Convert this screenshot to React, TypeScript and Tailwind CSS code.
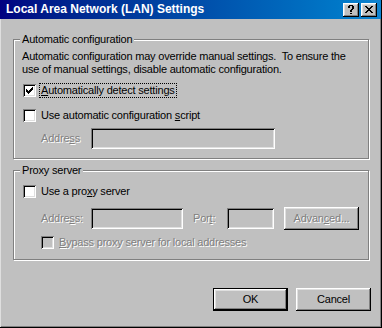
import type { ReactNode } from "react"

const raised =
  "shadow-[inset_-1px_-1px_0_#000,inset_1px_1px_0_#fff,inset_-2px_-2px_0_#808080,inset_2px_2px_0_#dfdfdf]"
const sunken =
  "shadow-[inset_1px_1px_0_#808080,inset_-1px_-1px_0_#fff,inset_2px_2px_0_#000,inset_-2px_-2px_0_#dfdfdf]"
const greyed = "text-[#808080] [text-shadow:1px_1px_0_#fff]"

// tiny pixel glyphs for the caption buttons
const Pixels = ({ rows, color = "#000" }: { rows: string[]; color?: string }) => (
  <svg width={rows[0].length} height={rows.length} shapeRendering="crispEdges">
    {rows.map((r, y) =>
      r.split("").map((c, x) => (c === "X" ? <rect key={`${x}-${y}`} x={x} y={y} width="1" height="1" fill={color} /> : null))
    )}
  </svg>
)

const helpGlyph = [".XXXX.", "XX..XX", "XX..XX", "....XX", "...XX.", "..XX..", "..XX..", "......", "..XX.."]
const closeGlyph = ["XX....XX", ".XX..XX.", "..XXXX..", "...XX...", "..XXXX..", ".XX..XX.", "XX....XX"]

const Check = ({ on, disabled }: { on?: boolean; disabled?: boolean }) => (
  <span
    className={`w-[13px] h-[13px] shrink-0 flex items-center justify-center ${sunken} ${disabled ? "bg-[#c0c0c0]" : "bg-white"}`}
  >
    {on && (
      <svg width="7" height="7" shapeRendering="crispEdges">
        <path d="M0 2H1V3H2V4H3V3H4V2H5V1H6V0H7V3H6V4H5V5H4V6H3V7H2V6H1V5H0Z" fill="#000" />
      </svg>
    )}
  </span>
)

const Field = ({ w }: { w: string }) => <div className={`h-[21px] bg-[#c0c0c0] ${sunken} ${w}`} />

const Group = ({ title, children }: { title: string; children: ReactNode }) => (
  <fieldset className="border border-[#808080] shadow-[1px_1px_0_#fff,inset_1px_1px_0_#fff] m-0 p-0 min-w-0">
    <legend className="ml-[6px] px-[2px] bg-[#c0c0c0] leading-[13px]">{title}</legend>
    {children}
  </fieldset>
)

const Btn = ({ children, def, disabled }: { children: ReactNode; def?: boolean; disabled?: boolean }) =>
  def ? (
    <div className="border border-black">
      <button className={`w-[73px] h-[21px] bg-[#c0c0c0] flex items-center justify-center ${raised}`}>{children}</button>
    </div>
  ) : (
    <button className={`w-[75px] h-[23px] bg-[#c0c0c0] flex items-center justify-center ${raised} ${disabled ? greyed : ""}`}>
      {children}
    </button>
  )

export default function App() {
  return (
    <div className="w-[382px] h-[328px] bg-[#c0c0c0] flex flex-col border-r border-b border-black text-[11px] leading-[13px] tracking-[-0.2px] text-black font-['Liberation_Sans',Arial,sans-serif]">
      {/* caption */}
      <div className="h-[19px] shrink-0 flex items-center justify-between pl-[6px] pr-[4px] bg-linear-to-r from-[#000080] to-[#1084d0]">
        <span className="text-white font-bold text-[12px] tracking-normal">Local Area Network (LAN) Settings</span>
        <div className="flex gap-[2px]">
          <div className={`w-[16px] h-[14px] bg-[#c0c0c0] flex items-center justify-center ${raised}`}>
            <Pixels rows={helpGlyph} />
          </div>
          <div className={`w-[16px] h-[14px] bg-[#c0c0c0] flex items-center justify-center ${raised}`}>
            <Pixels rows={closeGlyph} />
          </div>
        </div>
      </div>

      <div className="flex-1 flex flex-col border-l border-[#dfdfdf] shadow-[inset_-1px_-1px_0_#808080] px-3 pt-[14px]">
        <Group title="Automatic configuration">
          <div className="pl-[8px] pt-[4px] pb-[9px] flex flex-col">
            <p>
              Automatic configuration may override manual settings.&nbsp; To ensure the
              <br />
              use of manual settings, disable automatic configuration.
            </p>
            <div className="flex items-center gap-[4px] mt-[8px] pl-px">
              <Check on />
              <span className="outline outline-1 outline-dotted outline-black px-px">
                <u>A</u>utomatically detect settings
              </span>
            </div>
            <div className="flex items-center gap-[5px] mt-[12px] pl-px">
              <Check />
              <span>
                Use automatic configuration <u>s</u>cript
              </span>
            </div>
            <div className="flex items-center mt-[6px] pl-[19px]">
              <span className={`w-[50px] ${greyed}`}>
                Addre<u>s</u>s
              </span>
              <Field w="w-[184px]" />
            </div>
          </div>
        </Group>

        <div className="mt-[5px]">
          <Group title="Proxy server">
            <div className="pl-[8px] pt-[8px] pb-[10px] flex flex-col">
              <div className="flex items-center gap-[5px] pl-px">
                <Check />
                <span>
                  Use a pro<u>x</u>y server
                </span>
              </div>
              <div className="flex items-center mt-[9px] pl-[19px]">
                <span className={`w-[50px] ${greyed}`}>
                  Addre<u>s</u>s:
                </span>
                <Field w="w-[92px]" />
                <span className={`ml-[10px] w-[34px] ${greyed}`}>
                  Por<u>t</u>:
                </span>
                <Field w="w-[47px]" />
                <div className="ml-[10px]">
                  <Btn disabled>
                    Advan<u>c</u>ed...
                  </Btn>
                </div>
              </div>
              <div className={`flex items-center gap-[5px] mt-[6px] pl-[19px] ${greyed}`}>
                <Check disabled />
                <span>
                  <u>B</u>ypass proxy server for local addresses
                </span>
              </div>
            </div>
          </Group>
        </div>

        <div className="flex justify-end gap-[8px] mt-[28px] -mr-[2px]">
          <Btn def>OK</Btn>
          <Btn>Cancel</Btn>
        </div>
      </div>
    </div>
  )
}
